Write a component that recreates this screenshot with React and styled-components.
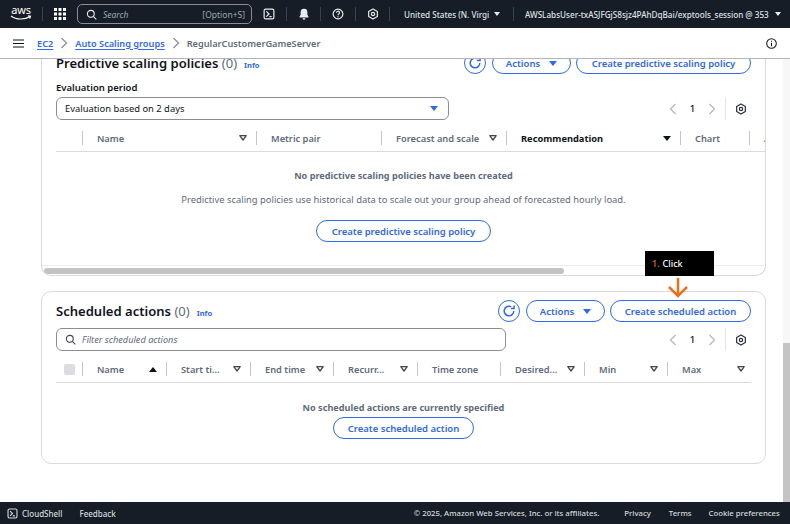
import React from "react";
import styled, { createGlobalStyle } from "styled-components";

const BLUE = "#2f68ea";
const Global = createGlobalStyle`
  html, body { margin: 0; padding: 0; height: 100%; overflow: hidden; }
  body { font-family: "Noto Sans", "Open Sans", sans-serif; color: #0f141a; background: #fff; }
  #root { height: 524px; }
`;
const Page = styled.div`display:flex;flex-direction:column;width:790px;height:524px;overflow:hidden;`;
const Nav = styled.header`height:28px;flex:none;background:#161d26;display:flex;align-items:center;color:#d5dbdb;font-size:8px;position:relative;`;
const Logo = styled.div`width:42px;flex:none;height:28px;display:flex;flex-direction:column;align-items:center;color:#fff;line-height:1;padding-top:5px;box-sizing:border-box;`;
const LogoText = styled.span`font-size:11px;letter-spacing:-.2px;height:10px;line-height:10px;`;
const NavDivider = styled.span`width:1px;height:14px;background:#3a424d;flex:none;margin:${p => p.$m || "0"};`;
const IconSlot = styled.span`width:${p => p.$w || 33}px;flex:none;display:flex;align-items:center;justify-content:center;color:#e9ebed;`;
const SearchBox = styled.div`width:175px;height:20px;box-sizing:border-box;border:1px solid #8c8c94;border-radius:5px;display:flex;align-items:center;padding:0 6px 0 8px;gap:6px;flex:none;`;
const SearchText = styled.span`font-style:italic;font-size:8.5px;color:#9ba7b6;flex:1;`;
const SearchKey = styled.span`font-size:8.5px;color:#9ba7b6;`;
const NavText = styled.span`font-size:8.15px;font-weight:500;white-space:nowrap;overflow:hidden;flex:none;width:${p => p.$w}px;margin-left:${p => p.$ml || 0}px;color:#dfe3e6;`;
const Caret = styled.span`flex:none;width:0;height:0;border-left:${p => p.$big ? 4 : 3}px solid transparent;border-right:${p => p.$big ? 4 : 3}px solid transparent;border-top:${p => p.$big ? 5 : 4}px solid ${p => p.$c || "#e9ebed"};margin-left:${p => p.$ml || 0}px;`;

const Crumbs = styled.div`height:31px;flex:none;box-sizing:border-box;background:#fff;border-bottom:1px solid #b4b4bb;display:flex;align-items:center;font-size:9.2px;font-weight:600;padding-left:13px;padding-right:13px;`;
const CrumbLink = styled.a`color:${BLUE};text-decoration:underline;text-underline-offset:2px;margin-left:${p => p.$ml || 0}px;`;
const CrumbSep = styled.span`color:#8c8c94;width:22px;display:flex;justify-content:center;flex:none;`;
const CrumbCurrent = styled.span`color:#5f6b7a;flex:1;`;

const Main = styled.main`flex:1;min-height:0;position:relative;overflow:hidden;background:#fff;padding:0 24px 0 41px;`;
const Card = styled.section`box-sizing:border-box;background:#fff;border:1px solid #d9d9de;border-radius:${p => p.$clip ? "0 0 10px 10px" : "10px"};margin:${p => p.$clip ? "-7px 0 15px" : "0"};border-top:${p => p.$clip ? "0" : "1px solid #d9d9de"};height:${p => p.$h}px;padding:${p => p.$clip ? "0" : "8px 0 0"};overflow:hidden;display:flex;flex-direction:column;`;
const HeadRow = styled.div`display:flex;align-items:center;height:22px;padding:0 14px;flex:none;`;
const Title = styled.h2`margin:0;font-size:13.05px;font-weight:600;line-height:18px;color:#0f141a;white-space:nowrap;`;
const Count = styled.span`font-weight:400;color:#5f6b7a;`;
const Info = styled.a`font-size:7.5px;font-weight:700;color:${BLUE};margin-left:7px;position:relative;top:2px;`;
const Spacer = styled.div`flex:1;`;
const Btn = styled.button`box-sizing:border-box;height:22px;width:${p => p.$w ? p.$w + "px" : "auto"};border:1.5px solid ${BLUE};border-radius:11px;background:#fff;color:${BLUE};font:600 9.5px "Noto Sans",sans-serif;display:inline-flex;align-items:center;justify-content:center;gap:9px;padding:0;margin-left:${p => p.$ml || 0}px;margin-top:${p => p.$mt || 0}px;white-space:nowrap;flex:none;`;
const IconBtn = styled(Btn)`width:22px;`;
const Label = styled.div`font-size:9.5px;font-weight:600;color:#0f141a;line-height:13px;margin:7px 14px 3px;`;
const ToolRow = styled.div`display:flex;align-items:center;height:23px;padding:0 14px;flex:none;margin-top:${p => p.$mt || 0}px;`;
const Select = styled.div`box-sizing:border-box;width:${p => p.$w}px;height:23px;border:1px solid #8c8c94;border-radius:6px;display:flex;align-items:center;padding:0 10px 0 8px;font-size:9.4px;color:#0f141a;justify-content:space-between;`;
const Filter = styled(Select)`justify-content:flex-start;gap:6px;`;
const FilterText = styled.span`font-style:italic;color:#5f6b7a;font-size:9.2px;`;
const Pager = styled.div`margin-left:auto;display:flex;align-items:center;color:#0f141a;font-size:9.5px;font-weight:500;padding-right:4px;`;
const PageNum = styled.span`width:31px;text-align:center;`;
const PagerDiv = styled.span`width:1px;height:23px;background:#e4e4e8;margin:0 9px;`;
const TableHead = styled.div`display:flex;align-items:center;height:26px;margin:${p => p.$clip ? "5px 0 0 14px" : "5px 14px 0"};border-bottom:1px solid #d9d9de;flex:none;overflow:hidden;`;
const Cell = styled.div`box-sizing:border-box;flex:none;width:${p => p.$w}px;height:14px;display:flex;align-items:center;justify-content:space-between;padding:0 ${p => p.$last ? 6 : 9}px 0 14px;border-left:1px solid #c6c6cd;font-size:9.3px;font-weight:${p => p.$active ? 700 : 600};color:${p => p.$active ? "#0f141a" : "#5f6b7a"};white-space:nowrap;`;
const CheckCell = styled.div`flex:none;width:26px;height:14px;display:flex;align-items:center;padding-left:8px;box-sizing:border-box;`;
const Check = styled.span`width:11px;height:11px;border-radius:2px;background:#dcdce2;`;
const SortUp = styled.span`width:0;height:0;border-left:4px solid transparent;border-right:4px solid transparent;border-bottom:5px solid #0f141a;`;
const SortDown = styled.span`width:0;height:0;border-left:4px solid transparent;border-right:4px solid transparent;border-top:5px solid #0f141a;`;
const Empty = styled.div`display:flex;flex-direction:column;align-items:center;font-size:9.4px;color:#5f6b7a;flex:none;`;
const EmptyTitle = styled.div`font-weight:700;font-size:9.15px;line-height:13px;margin-top:${p => p.$mt}px;`;
const EmptyText = styled.div`line-height:13px;margin-top:11px;`;
const HScroll = styled.div`margin-top:auto;height:9px;border-top:1px solid #ececef;flex:none;display:flex;align-items:center;padding-left:2px;`;
const HThumb = styled.div`width:520px;height:6px;border-radius:3px;background:#c2c2c2;`;
const VTrack = styled.div`position:absolute;right:0;top:0;bottom:0;width:7px;background:#f7f7f7;`;
const VThumb = styled.div`position:absolute;left:0;right:0;top:284px;bottom:0;background:#c4c4c4;`;
const Callout = styled.div`position:absolute;left:645px;top:192px;width:69px;height:25px;background:#000;color:#fff;font-size:9px;font-weight:500;display:flex;align-items:center;padding-left:7px;box-sizing:border-box;`;
const CalloutNum = styled.span`color:#e8711c;margin-right:3px;`;
const Arrow = styled.svg`position:absolute;left:667px;top:218px;`;
const Foot = styled.footer`height:22px;flex:none;background:#161d26;color:#d5dbdb;font-size:8px;font-weight:500;display:flex;align-items:center;padding-left:7px;`;
const FootLink = styled.span`margin-left:${p => p.$ml || 0}px;white-space:nowrap;font-size:${p => p.$s || 8}px;`;

const Refresh = () => (<svg width="14" height="14" viewBox="0 0 16 16" fill="none" stroke={BLUE} strokeWidth="1.7"><path d="M13.5 8A5.5 5.5 0 1 1 10.5 3.1" /><path d="M13.800 1.600v3.600h-3.600" /></svg>);
const Gear = ({ c = "#2a2f38", s = 12 }) => (<svg width={s} height={s} viewBox="0 0 16 16" fill="none" stroke={c} strokeWidth="1.6"><path d="M8 1.200l5.800 3.400v6.800L8 14.800l-5.800-3.400V4.600z" strokeLinejoin="round" /><circle cx="8" cy="8" r="2.200" /></svg>);
const Search = ({ c, s = 11 }) => (<svg width={s} height={s} viewBox="0 0 16 16" fill="none" stroke={c} strokeWidth="1.6"><circle cx="7" cy="7" r="5" /><path d="M11 11l4 4" /></svg>);
const Chevron = ({ left, c = "#b4b4bb" }) => (<svg width="8" height="12" viewBox="0 0 8 12" fill="none" stroke={c} strokeWidth="1.2"><path d={left ? "M6.500 1L1.500 6l5 5" : "M1.500 1l5 5-5 5"} /></svg>);
const FilterIcon = () => (<svg width="8" height="6" viewBox="0 0 8 6" fill="none" stroke="#424650" strokeWidth="1.3"><path d="M.8.7h6.400L4 5z" strokeLinejoin="round" /></svg>);
const Terminal = ({ s = 12 }) => (<svg width={s} height={s} viewBox="0 0 16 16" fill="none" stroke="currentColor" strokeWidth="1.6"><rect x="1.500" y="1.500" width="13" height="13" rx="2" /><path d="M4.500 4.500L8 8l-3.500 3.500M8.500 11.500h3" /></svg>);

const Paging = () => (
  <Pager>
    <Chevron left /><PageNum>1</PageNum><Chevron />
    <PagerDiv />
    <Gear />
  </Pager>
);

const policyCols = [
  { t: "Name", w: 174, f: true }, { t: "Metric pair", w: 125 }, { t: "Forecast and scale", w: 125, f: true },
  { t: "Recommendation", w: 174, a: "down" }, { t: "Chart", w: 69 }, { t: "A", w: 40 },
];
const schedCols = [
  { t: "Name", w: 84, a: "up" }, { t: "Start ti...", w: 84, f: true }, { t: "End time", w: 83, f: true },
  { t: "Recurr...", w: 84, f: true }, { t: "Time zone", w: 83 }, { t: "Desired...", w: 84, f: true },
  { t: "Min", w: 83, f: true }, { t: "Max", w: 84, f: true, last: true },
];
const Columns = ({ cols }) => cols.map((c) => (
  <Cell key={c.t} $w={c.w} $active={c.a === "down"} $last={c.last}>
    <span>{c.t}</span>
    {c.f && <FilterIcon />}
    {c.a === "up" && <SortUp />}
    {c.a === "down" && <SortDown />}
  </Cell>
));

export default function App() {
  return (
    <Page>
      <Global />
      <Nav>
        <Logo>
          <LogoText>aws</LogoText>
          <svg width="22" height="6" viewBox="0 0 22 6" fill="none" stroke="#fff" strokeWidth="1.1"><path d="M1 1c5 4 14 4 19 .5M18 .8l2.600.4-.9 2.400" /></svg>
        </Logo>
        <NavDivider />
        <IconSlot $w={34}>
          <svg width="12" height="12" viewBox="0 0 12 12" fill="#fff">{[0, 4.5, 9].flatMap((x) => [0, 4.5, 9].map((y) => <rect key={x + "-" + y} x={x} y={y} width="3" height="3" />))}</svg>
        </IconSlot>
        <SearchBox>
          <Search c="#e9ebed" />
          <SearchText>Search</SearchText>
          <SearchKey>[Option+S]</SearchKey>
        </SearchBox>
        <IconSlot $w={34}><Terminal /></IconSlot>
        <NavDivider />
        <IconSlot>
          <svg width="12" height="12" viewBox="0 0 16 16" fill="#e9ebed"><path d="M8 1a4.500 4.500 0 0 0-4.500 4.500V9L2 11.500v1h12v-1L12.500 9V5.500A4.500 4.500 0 0 0 8 1zM6 13.500a2 2 0 0 0 4 0z" /></svg>
        </IconSlot>
        <NavDivider />
        <IconSlot $w={34}>
          <svg width="12" height="12" viewBox="0 0 16 16" fill="none" stroke="#e9ebed" strokeWidth="1.6"><circle cx="8" cy="8" r="6.500" /><path d="M6 6.300a2 2 0 1 1 3 1.700c-.7.400-1 .8-1 1.600M8 11v1.300" /></svg>
        </IconSlot>
        <NavDivider />
        <IconSlot><Gear c="#e9ebed" /></IconSlot>
        <NavDivider />
        <NavText $w={87} $ml={14}>United States (N. Virgi</NavText>
        <Caret $ml={3} />
        <NavDivider $m="0 0 0 13px" />
        <NavText $w={248} $ml={11}>AWSLabsUser-txASJFGjS8sjz4PAhDqBai/exptools_session @ 353</NavText>
        <Caret $ml={2} />
      </Nav>
      <Crumbs>
        <svg width="11" height="9" viewBox="0 0 11 9" stroke="#0f141a" strokeWidth="1.2"><path d="M0 1h11M0 4.500h11M0 8h11" /></svg>
        <CrumbLink $ml={13}>EC2</CrumbLink>
        <CrumbSep><Chevron c="#8c8c94" /></CrumbSep>
        <CrumbLink>Auto Scaling groups</CrumbLink>
        <CrumbSep><Chevron c="#8c8c94" /></CrumbSep>
        <CrumbCurrent>RegularCustomerGameServer</CrumbCurrent>
        <svg width="11" height="11" viewBox="0 0 16 16" fill="none" stroke="#0f141a" strokeWidth="1.500"><circle cx="8" cy="8" r="7" /><path d="M8 7v5M8 4v1.600" /></svg>
      </Crumbs>
      <Main>
        <Card $clip $h={224}>
          <HeadRow>
            <Title>Predictive scaling policies <Count>(0)</Count></Title>
            <Info>Info</Info>
            <Spacer />
            <IconBtn><Refresh /></IconBtn>
            <Btn $w={79} $ml={6}>Actions <Caret $big $c={BLUE} /></Btn>
            <Btn $w={175} $ml={5}>Create predictive scaling policy</Btn>
          </HeadRow>
          <Label>Evaluation period</Label>
          <ToolRow>
            <Select $w={393}>Evaluation based on 2 days <Caret $big $c={BLUE} /></Select>
            <Paging />
          </ToolRow>
          <TableHead $clip>
            <CheckCell />
            <Columns cols={policyCols} />
          </TableHead>
          <Empty>
            <EmptyTitle $mt={17}>No predictive scaling policies have been created</EmptyTitle>
            <EmptyText>Predictive scaling policies use historical data to scale out your group ahead of forecasted hourly load.</EmptyText>
            <Btn $w={175} $mt={14}>Create predictive scaling policy</Btn>
          </Empty>
          <HScroll><HThumb /></HScroll>
        </Card>
        <Card $h={173}>
          <HeadRow>
            <Title>Scheduled actions <Count>(0)</Count></Title>
            <Info>Info</Info>
            <Spacer />
            <IconBtn><Refresh /></IconBtn>
            <Btn $w={79} $ml={6}>Actions <Caret $big $c={BLUE} /></Btn>
            <Btn $w={141} $ml={5}>Create scheduled action</Btn>
          </HeadRow>
          <ToolRow $mt={6}>
            <Filter $w={450}><Search c="#424650" /><FilterText>Filter scheduled actions</FilterText></Filter>
            <Paging />
          </ToolRow>
          <TableHead>
            <CheckCell><Check /></CheckCell>
            <Columns cols={schedCols} />
          </TableHead>
          <Empty>
            <EmptyTitle $mt={18}>No scheduled actions are currently specified</EmptyTitle>
            <Btn $w={141} $mt={3}>Create scheduled action</Btn>
          </Empty>
        </Card>
        <VTrack><VThumb /></VTrack>
        <Callout><CalloutNum>1.</CalloutNum> Click</Callout>
        <Arrow width="24" height="22" viewBox="0 0 24 22" fill="none" stroke="#e8711c" strokeWidth="2.500"><path d="M11 1v18M2 10l9 9 9-9" /></Arrow>
      </Main>
      <Foot>
        <Terminal s={11} />
        <FootLink $ml={4}>CloudShell</FootLink>
        <FootLink $ml={17}>Feedback</FootLink>
        <FootLink $ml={298} $s={7.75}>© 2025, Amazon Web Services, Inc. or its affiliates.</FootLink>
        <FootLink $ml={25} $s={7.75}>Privacy</FootLink>
        <FootLink $ml={18} $s={7.75}>Terms</FootLink>
        <FootLink $ml={17} $s={7.75}>Cookie preferences</FootLink>
      </Foot>
    </Page>
  );
}
